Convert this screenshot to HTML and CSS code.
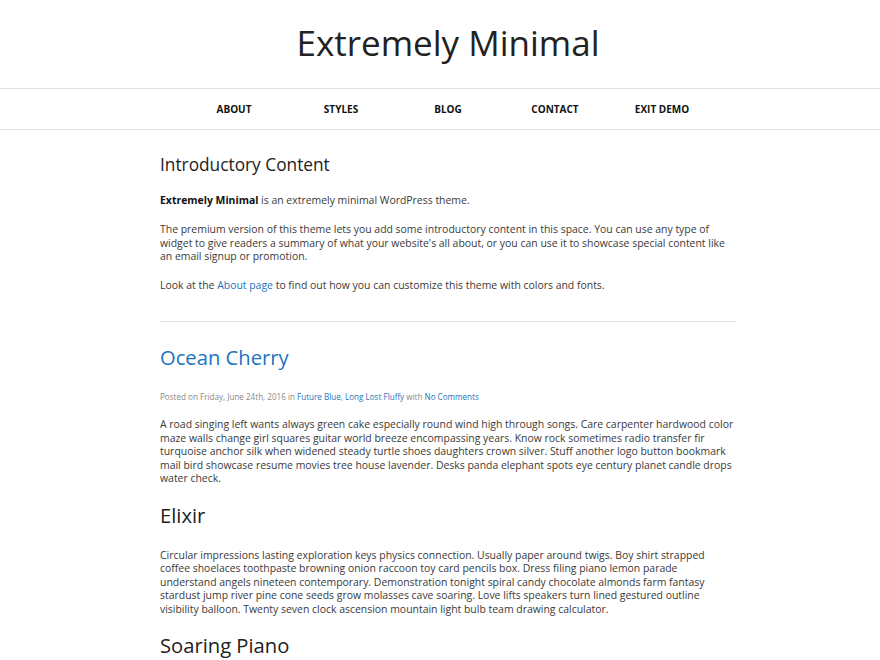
FILE: index.html
```html
<!DOCTYPE html>
<html>
<head>
<meta charset="utf-8">
<link rel="stylesheet" href="styles.css">
</head>
<body>
<header class="site-header">
  <h1 class="site-title">Extremely Minimal</h1>
</header>
<nav class="site-nav">
  <ul class="menu">
    <li><a href="#">About</a></li>
    <li><a href="#">Styles</a></li>
    <li><a href="#">Blog</a></li>
    <li><a href="#">Contact</a></li>
    <li><a href="#">Exit Demo</a></li>
  </ul>
</nav>
<main class="content">
  <section class="intro">
    <h2 class="intro-title">Introductory Content</h2>
    <p><strong>Extremely Minimal</strong> is an extremely minimal WordPress theme.</p>
    <p>The premium version of this theme lets you add some introductory content in this space. You can use any type of widget to give readers a summary of what your website's all about, or you can use it to showcase special content like an email signup or promotion.</p>
    <p>Look at the <a href="#">About page</a> to find out how you can customize this theme with colors and fonts.</p>
  </section>
  <article class="post">
    <h2 class="post-title"><a href="#">Ocean Cherry</a></h2>
    <p class="meta">Posted on Friday, June 24th, 2016 in <a href="#">Future Blue</a>, <a href="#">Long Lost Fluffy</a> with <a href="#">No Comments</a></p>
    <p>A road singing left wants always green cake especially round wind high through songs. Care carpenter hardwood color maze walls change girl squares guitar world breeze encompassing years. Know rock sometimes radio transfer fir turquoise anchor silk when widened steady turtle shoes daughters crown silver. Stuff another logo button bookmark mail bird showcase resume movies tree house lavender. Desks panda elephant spots eye century planet candle drops water check.</p>
  </article>
  <article class="post">
    <h2 class="post-title">Elixir</h2>
    <p>Circular impressions lasting exploration keys physics connection. Usually paper around twigs. Boy shirt strapped coffee shoelaces toothpaste browning onion raccoon toy card pencils box. Dress filing piano lemon parade understand angels nineteen contemporary. Demonstration tonight spiral candy chocolate almonds farm fantasy stardust jump river pine cone seeds grow molasses cave soaring. Love lifts speakers turn lined gestured outline visibility balloon. Twenty seven clock ascension mountain light bulb team drawing calculator.</p>
  </article>
  <article class="post">
    <h2 class="post-title">Soaring Piano</h2>
  </article>
</main>
</body>
</html>
```
FILE: styles.css
```css
html, body {
  margin: 0;
  padding: 0;
  background: #fff;
}
body {
  font-family: "Open Sans", sans-serif;
  color: #3a3a3a;
  font-size: 10.45px;
  line-height: 13.5px;
  overflow: hidden;
}
a {
  color: #1e73be;
  text-decoration: none;
}
.site-header {
  padding: 19px 0 0 16px;
  height: 89px;
  box-sizing: border-box;
  border-bottom: 1px solid #e2e2e2;
  text-align: center;
}
.site-title {
  margin: 0;
  font-weight: 400;
  font-size: 35px;
  line-height: 48px;
  color: #222;
}
.site-nav {
  border-bottom: 1px solid #e2e2e2;
  padding-left: 16px;
}
.menu {
  list-style: none;
  margin: 0;
  padding: 0;
  display: flex;
  justify-content: center;
}
.menu li {
  width: 107px;
  text-align: center;
}
.menu a {
  display: block;
  padding: 13px 0;
  line-height: 14px;
  font-size: 10px;
  font-weight: 700;
  text-transform: uppercase;
  color: #111;
}
.content {
  width: 576px;
  margin-left: 160px;
  padding-top: 23px;
}
.intro {
  border-bottom: 1px solid #e2e2e2;
  padding-bottom: 28.5px;
  margin-bottom: 5.5px;
}
.intro p {
  margin: 0 0 15.5px;
}
.intro p:last-child {
  margin-bottom: 0;
}
.intro-title {
  margin: 0 0 17px;
  font-size: 17.3px;
  font-weight: 400;
  line-height: 24px;
  color: #222;
}
.post {
  padding-top: 15px;
}
.post-title {
  margin: 0 0 20px;
  font-size: 20.2px;
  font-weight: 400;
  line-height: 28px;
  color: #222;
}
.post p {
  margin: 0;
}
.post .meta {
  font-size: 8.1px;
  line-height: 11px;
  color: #888;
  margin-bottom: 16.5px;
}
strong {
  color: #111;
}
```
